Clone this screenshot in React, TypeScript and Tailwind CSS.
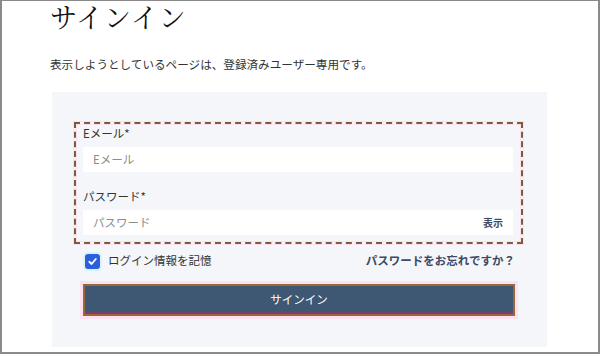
import React from 'react';

const jp = { fontFamily: '"Noto Sans CJK JP", "Noto Sans", sans-serif' };

function Field({ label, placeholder, trailing }: { label: string; placeholder: string; trailing?: string }) {
    return (
        <div className="flex flex-col">
            <label className="text-[11.5px] leading-4 text-[#333]">{label}*</label>
            <div className="mt-[6px] h-[25px] bg-white flex items-center justify-between pl-[10px] pr-[10px]">
                <span className="text-[11.5px] text-[#8c8c8c]">{placeholder}</span>
                {trailing && <span className="text-[10px] font-bold text-[#3b4a66]">{trailing}</span>}
            </div>
        </div>
    );
}

export default function App() {
    return (
        <div className="w-[600px] h-[354px] overflow-hidden bg-white border-2 border-t border-[#8a8a8a]" style={jp}>
            <div className="pl-[48px]">
                {/* Title */}
                <h1 className="text-[27px] leading-8 tracking-[1px] text-[#111]" style={{ fontFamily: '"Noto Serif CJK JP", "Noto Sans CJK JP", serif' }}>
                    サインイン
                </h1>
                <p className="mt-[23px] text-[11.6px] leading-4 text-[#333]">
                    表示しようとしているページは、登録済みユーザー専用です。
                </p>

                {/* Panel */}
                <div className="mt-[20px] ml-[2px] w-[495px] bg-[#f4f6f9] pt-[30px] pl-[31px] pr-[32px] pb-[31px]">
                    <div className="-ml-[9px] -mr-[8px] border-2 border-dashed border-[#7f5a3e] shadow-[0_0_0_1px_#fde1ee,inset_0_0_0_1px_#fde1ee] pl-[7px] pr-[8px] pt-[1px] pb-[7px]">
                        <Field label="Eメール" placeholder="Eメール" />
                        <div className="mt-[16px]">
                            <Field label="パスワード" placeholder="パスワード" trailing="表示" />
                        </div>
                    </div>

                    <div className="mt-[9px] h-4 flex items-center justify-between">
                        <div className="flex items-center">
                            <span className="ml-[2px] w-[15px] h-[15px] rounded-[3px] bg-[#2b5fdc] flex items-center justify-center shadow-[0_0_0_2px_#d5f5fb]">
                                <svg width="11" height="11" viewBox="0 0 12 12" fill="none">
                                    <path d="M2.5 6.3 L5 8.7 L9.6 3.3" stroke="white" strokeWidth="2" strokeLinecap="round" strokeLinejoin="round" />
                                </svg>
                            </span>
                            <span className="ml-[8px] text-[11.5px] text-[#333]">ログイン情報を記憶</span>
                        </div>
                        <span className="text-[11.5px] font-bold text-[#3b4a66]">パスワードをお忘れですか？</span>
                    </div>

                    <button className="mt-[15px] w-full h-[32px] bg-[#3e5772] border-2 border-[#9a673d] shadow-[0_0_0_3px_#fde1ee,inset_0_-2px_0_#7a3f72] text-white text-[11.5px] flex items-center justify-center">
                        サインイン
                    </button>
                </div>
            </div>
        </div>
    );
}
